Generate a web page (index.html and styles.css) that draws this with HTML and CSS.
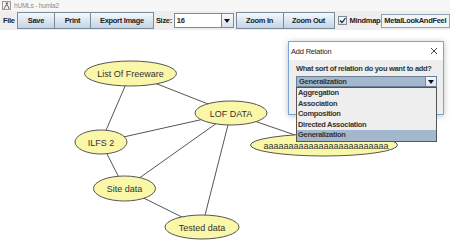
FILE: index.html
```html
<!DOCTYPE html>
<html lang="en">

<head>
    <meta charset="UTF-8">
    <title>hUMLs - humla2</title>
    <link rel="stylesheet" href="styles.css">
</head>

<body>
    <div class="app">
        <div class="titlebar">
            <svg class="app-icon" width="9" height="9" viewBox="0 0 9 9">
                <rect x="0.5" y="0.5" width="8" height="8" fill="#f4f4f4" stroke="#9a9a9a" />
                <circle cx="5" cy="2.5" r="1.2" fill="#7a6a5a" />
                <path d="M2 8 L4 4 L6 5 L7 8" fill="none" stroke="#7a6a5a" stroke-width="1" />
            </svg>
            <span>hUMLs - humla2</span>
        </div>

        <div class="toolbar">
            <span class="tb-label file-label">File</span>
            <div class="btn-group">
                <button class="btn btn-save">Save</button>
                <button class="btn btn-print">Print</button>
                <button class="btn btn-export">Export Image</button>
            </div>
            <span class="tb-label size-label">Size:</span>
            <div class="combo size-combo">
                <span class="combo-value">16</span>
                <span class="combo-arrow"><span class="tri"></span></span>
            </div>
            <div class="btn-group zoom-group">
                <button class="btn btn-zoomin">Zoom In</button>
                <button class="btn btn-zoomout">Zoom Out</button>
            </div>
            <span class="checkbox">
                <svg width="7" height="7" viewBox="0 0 7 7">
                    <path d="M1 3.5 L3 5.5 L6.5 1" fill="none" stroke="#222" stroke-width="1.2" />
                </svg>
            </span>
            <span class="tb-label mind-label">Mindmap</span>
            <div class="laf-field">MetalLookAndFeel</div>
        </div>

        <div class="canvas">
            <svg class="diagram" width="450" height="214" viewBox="0 30 450 214">
                <g class="edges">
                    <line x1="130.5" y1="73.5" x2="231" y2="113" />
                    <line x1="130.5" y1="73.5" x2="101" y2="142" />
                    <line x1="101" y1="142" x2="231" y2="113" />
                    <line x1="101" y1="142" x2="124.5" y2="188.5" />
                    <line x1="231" y1="113" x2="124.5" y2="188.5" />
                    <line x1="231" y1="113" x2="202" y2="227" />
                    <line x1="231" y1="113" x2="324" y2="145" />
                    <line x1="124.5" y1="188.5" x2="202" y2="227" />
                </g>
                <g class="nodes">
                    <ellipse cx="130.5" cy="73.5" rx="46" ry="12.5" />
                    <text x="130.5" y="77">List Of Freeware</text>

                    <ellipse cx="231" cy="113" rx="36" ry="12" />
                    <text x="231" y="116.5">LOF DATA</text>

                    <ellipse cx="101" cy="142" rx="26" ry="12" />
                    <text x="101" y="145.5">ILFS 2</text>

                    <ellipse cx="324" cy="145" rx="73.5" ry="11" />
                    <text x="326" y="148.5">aaaaaaaaaaaaaaaaaaaaaaaaa</text>

                    <ellipse cx="124.5" cy="188.5" rx="31" ry="12.5" />
                    <text x="124.5" y="192">Site data</text>

                    <ellipse cx="202" cy="227" rx="37" ry="12" />
                    <text x="202" y="230.5">Tested data</text>
                </g>
            </svg>
        </div>

        <div class="dialog">
            <div class="dialog-title">
                <span>Add Relation</span>
                <svg width="8" height="8" viewBox="0 0 8 8">
                    <path d="M1 1 L7 7 M7 1 L1 7" stroke="#333" stroke-width="0.9" />
                </svg>
            </div>
            <div class="dialog-body">
                <div class="dialog-label">What sort of relation do you want to add?</div>
                <div class="combo relation-combo">
                    <span class="combo-value">Generalization</span>
                    <span class="combo-arrow"><span class="tri"></span></span>
                </div>
            </div>
        </div>

        <ul class="popup-list">
            <li>Aggregation</li>
            <li>Association</li>
            <li>Composition</li>
            <li>Directed Association</li>
            <li class="selected">Generalization</li>
        </ul>
    </div>
</body>

</html>
```

FILE: styles.css
```css
* {
    margin: 0;
    padding: 0;
    box-sizing: border-box;
}

body {
    width: 450px;
    height: 244px;
    overflow: hidden;
    background: #fff;
    font-family: "Liberation Sans", Arial, sans-serif;
    color: #333;
}

.app {
    position: relative;
    width: 450px;
    height: 244px;
}

.titlebar {
    height: 11px;
    display: flex;
    align-items: center;
    gap: 3px;
    padding-left: 2px;
    font-size: 6.5px;
    letter-spacing: -0.2px;
    color: #8c8c8c;
    background: #f7f7f7;
}

.toolbar {
    height: 19px;
    display: flex;
    align-items: center;
    padding-left: 3px;
    background: #eeeeee;
    font-size: 7.5px;
    letter-spacing: -0.3px;
    font-weight: bold;
    color: #222;
}

.tb-label {
    white-space: nowrap;
}

.file-label {
    width: 14px;
}

.size-label {
    width: 17px;
    margin-left: 2px;
}

.mind-label {
    width: 31px;
    margin-left: 3px;
}

.btn-group {
    display: flex;
}

.zoom-group {
    margin-left: 2px;
}

.btn {
    height: 17px;
    border: 1px solid #7a8a99;
    background: linear-gradient(#f4f8fb, #c3d4e5);
    font: inherit;
    letter-spacing: inherit;
    color: #222;
}

.btn + .btn {
    margin-left: -1px;
}

.btn-save { width: 38px; }
.btn-print { width: 37px; }
.btn-export { width: 64px; }
.btn-zoomin { width: 48px; }
.btn-zoomout { width: 52px; }

.combo {
    display: flex;
    align-items: stretch;
    border: 1px solid #7a8a99;
    background: #fff;
}

.combo-value {
    flex: 1;
    padding-left: 2px;
    display: flex;
    align-items: center;
    white-space: nowrap;
}

.combo-arrow {
    width: 12px;
    border-left: 1px solid #7a8a99;
    background: linear-gradient(#f7f9fb, #d9e3ec);
    display: flex;
    align-items: center;
    justify-content: center;
}

.tri {
    width: 0;
    height: 0;
    border-left: 3.5px solid transparent;
    border-right: 3.5px solid transparent;
    border-top: 4px solid #111;
}

.size-combo {
    width: 60px;
    height: 15px;
    margin-left: 1px;
}

.checkbox {
    width: 9px;
    height: 9px;
    margin-left: 3px;
    border: 1px solid #7a8a99;
    background: linear-gradient(#fdfdfe, #dbe5ee);
    display: flex;
    align-items: center;
    justify-content: center;
}

.laf-field {
    width: 69px;
    height: 14px;
    margin-left: 1px;
    padding-left: 2px;
    border: 1px solid #8fa3b8;
    background: #f3f6f9;
    display: flex;
    align-items: center;
    white-space: nowrap;
    overflow: hidden;
}

.canvas {
    height: 214px;
    background: #fff;
}

.diagram {
    display: block;
}

.edges line {
    stroke: #555;
    stroke-width: 1;
}

.nodes ellipse {
    fill: #fbf7a8;
    stroke: #555;
    stroke-width: 1;
}

.nodes text {
    font-family: "Liberation Sans", Arial, sans-serif;
    font-size: 9px;
    fill: #333;
    text-anchor: middle;
}

/* Add Relation dialog */
.dialog {
    position: absolute;
    left: 288px;
    top: 41px;
    width: 156px;
    height: 74px;
    border: 1px solid #7aa3d6;
    background: #eeeeee;
    box-shadow: 0 1px 6px rgba(0, 0, 0, 0.25);
}

.dialog-title {
    height: 18px;
    background: #fff;
    display: flex;
    align-items: center;
    justify-content: space-between;
    padding: 0 5px 0 2px;
    font-size: 7.5px;
    letter-spacing: -0.2px;
    color: #222;
}

.dialog-body {
    padding: 4px 6px 0 7px;
}

.dialog-label {
    font-size: 7.5px;
    letter-spacing: -0.3px;
    font-weight: bold;
    line-height: 10px;
    color: #333;
    white-space: nowrap;
}

.relation-combo {
    margin-top: 2px;
    height: 11px;
    background: #a3b8cc;
    border-color: #6d7f93;
    font-size: 7.5px;
    letter-spacing: -0.3px;
    font-weight: bold;
    color: #333;
}

.relation-combo .combo-arrow {
    width: 11px;
    background: linear-gradient(#f4f6f8, #dfe6ed);
}

.popup-list {
    position: absolute;
    left: 296px;
    top: 87px;
    width: 141px;
    height: 55px;
    list-style: none;
    border: 1px solid #555;
    background: #eeeeee;
    font-size: 7.5px;
    letter-spacing: -0.3px;
    font-weight: bold;
    color: #333;
}

.popup-list li {
    height: 10.6px;
    line-height: 10.6px;
    padding-left: 1px;
    white-space: nowrap;
}

.popup-list li.selected {
    background: #a3b8cc;
}
```
